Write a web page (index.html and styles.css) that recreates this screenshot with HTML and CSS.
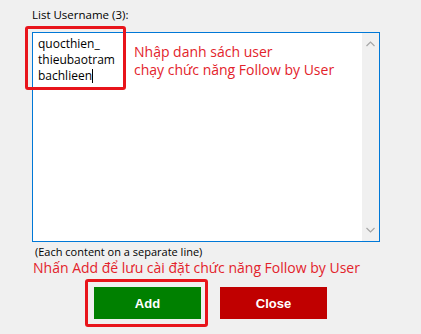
FILE: index.html
```html
<!DOCTYPE html>
<html lang="vi">
<head>
<meta charset="utf-8">
<link rel="stylesheet" href="styles.css">
</head>
<body>
<div class="dialog">
  <div class="label">List Username (3):</div>
  <div class="editor">
    <div class="editor-body">
      <div class="lines">
        <div>quocthien_</div>
        <div>thieubaotram</div>
        <div>bachlieen<span class="caret"></span></div>
      </div>
      <div class="note">
        <div>Nhập danh sách user</div>
        <div>chạy chức năng Follow by User</div>
      </div>
    </div>
    <div class="scrollbar">
      <svg class="arrow" width="9" height="6" viewBox="0 0 9 6"><path d="M0.5 5 L4.5 1 L8.5 5" fill="none" stroke="#a6a6a6" stroke-width="1.2"/></svg>
      <svg class="arrow" width="9" height="6" viewBox="0 0 9 6"><path d="M0.5 1 L4.5 5 L8.5 1" fill="none" stroke="#a6a6a6" stroke-width="1.2"/></svg>
    </div>
    <div class="highlight highlight-lines"></div>
  </div>
  <div class="hint">(Each content on a separate line)</div>
  <div class="note note-bottom">Nhấn Add để lưu cài đặt chức năng Follow by User</div>
  <div class="buttons">
    <div class="btn-wrap">
      <button class="btn btn-add">Add</button>
      <div class="highlight highlight-add"></div>
    </div>
    <button class="btn btn-close">Close</button>
  </div>
</div>
</body>
</html>
```

FILE: styles.css
```css
html, body {
  margin: 0;
  padding: 0;
  background: #f0f0f0;
}

.dialog {
  width: 421px;
  height: 334px;
  font-family: "Open Sans", "Noto Sans", sans-serif;
  color: #000;
  overflow: hidden;
}

.label {
  font-size: 11.5px;
  line-height: 15px;
  padding: 7px 0 0 32px;
  height: 32px;
  box-sizing: border-box;
}

.editor {
  position: relative;
  margin-left: 32px;
  width: 348px;
  height: 210px;
  box-sizing: border-box;
  border: 1px solid #0078d7;
  background: #fff;
  display: flex;
}

.editor-body {
  flex: 1;
  display: flex;
  padding: 3px 0 0 5px;
}

.lines {
  font-size: 12px;
  line-height: 16px;
  width: 96px;
}

.caret {
  display: inline-block;
  width: 1px;
  height: 14px;
  background: #000;
  vertical-align: -3px;
}

.note {
  color: #e3232b;
  font-size: 14px;
  line-height: 18px;
}

.editor .note {
  padding-top: 7px;
}

.scrollbar {
  width: 17px;
  background: #f0f0f0;
  display: flex;
  flex-direction: column;
  justify-content: space-between;
  align-items: center;
  padding: 8px 0 8px;
}

.arrow {
  display: block;
}

.highlight {
  position: absolute;
  border: 3px solid #e8141b;
  border-radius: 3px;
  box-sizing: border-box;
  pointer-events: none;
}

.highlight-lines {
  left: -8px;
  top: -7px;
  width: 101px;
  height: 64px;
}

.hint {
  font-size: 11px;
  line-height: 15px;
  padding: 2px 0 0 35px;
}

.note-bottom {
  padding-left: 33px;
  line-height: 18px;
}

.buttons {
  display: flex;
  gap: 19px;
  padding: 10px 0 0 94px;
}

.btn-wrap {
  position: relative;
}

.btn {
  display: block;
  width: 107px;
  height: 32px;
  border: none;
  margin: 0;
  padding: 0;
  color: #fff;
  font-family: "Liberation Sans", Arial, sans-serif;
  font-weight: bold;
  font-size: 13px;
}

.btn-add {
  background: #008000;
}

.btn-close {
  background: #c00000;
}

.highlight-add {
  left: -9px;
  top: -8px;
  width: 123px;
  height: 48px;
}
```
